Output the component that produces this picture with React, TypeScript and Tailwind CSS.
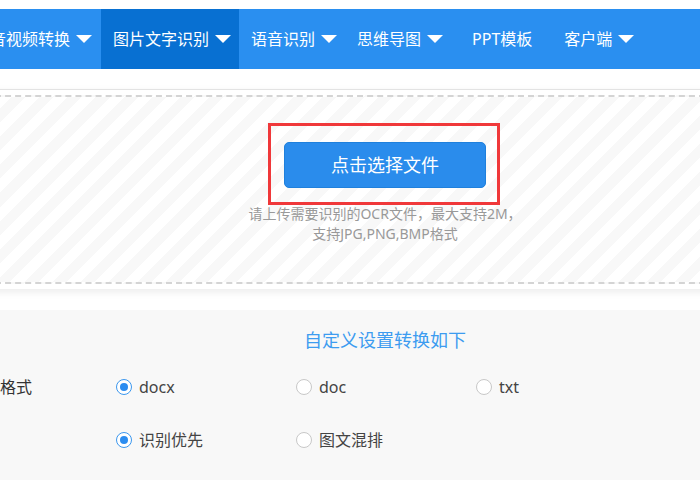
import React from 'react';

const font = "font-['Noto_Sans','Noto_Sans_CJK_SC',sans-serif]";

function Caret() {
  return <span className="ml-[6px] h-0 w-0 border-x-[8px] border-t-[8px] border-x-transparent border-t-white" />;
}

function Radio({ checked }: { checked?: boolean }) {
  return checked ? (
    <span className="flex h-[16px] w-[16px] items-center justify-center rounded-full border border-[#3b97ee] bg-white">
      <span className="h-[8px] w-[8px] rounded-full bg-[#2b8cf0]" />
    </span>
  ) : (
    <span className="h-[16px] w-[16px] rounded-full border border-[#c8c8c8] bg-white" />
  );
}

function Option({ label, checked }: { label: string; checked?: boolean }) {
  return (
    <label className="flex w-[180px] items-center gap-[7px] text-[16px] leading-6 text-[#444]">
      <Radio checked={checked} />
      {label}
    </label>
  );
}

export default function App() {
  return (
    <div className={`${font} flex h-[480px] w-[700px] flex-col overflow-hidden bg-white`}>
      {/* nav */}
      <nav className="mt-[9px] flex h-[60px] shrink-0 items-stretch bg-[#2a8ff0] text-[16px] leading-6 text-white">
        <div className="-ml-[22px] flex items-center pl-3 pr-[9px]">
          音视频转换
          <Caret />
        </div>
        <div className="flex items-center bg-[#0870d2] pl-3 pr-2">
          图片文字识别
          <Caret />
        </div>
        <div className="flex items-center pl-3 pr-2">
          语音识别
          <Caret />
        </div>
        <div className="flex items-center pl-3 pr-2">
          思维导图
          <Caret />
        </div>
        <div className="flex items-center pl-[21px] pr-5">PPT模板</div>
        <div className="flex items-center pl-3 pr-2">
          客户端
          <Caret />
        </div>
      </nav>

      {/* upload box */}
      <div className="-mx-[10px] mt-[20px] shrink-0 border-t border-[#e3e3e3] bg-white p-[5px] shadow-[0_3px_8px_rgba(0,0,0,0.08)]">
        <div className="flex h-[189px] flex-col items-center border-2 border-dashed border-[#d4d4d4] bg-[repeating-linear-gradient(135deg,#ffffff_0px,#ffffff_10px,#f8f8f8_10px,#f8f8f8_20px)] pl-[70px] pt-[45px]">
          <div className="relative">
            <button className="h-[46px] w-[202px] rounded-[5px] border border-[#1f80dc] bg-[#2a8cec] text-[18px] text-white">
              点击选择文件
            </button>
            <div className="pointer-events-none absolute -bottom-[17px] -left-[16px] -right-[14px] -top-[19px] border-[3px] border-[#f0383a]" />
          </div>
          <p className="mt-[16px] text-center text-[14px] leading-5 text-[#999]">
            请上传需要识别的OCR文件，最大支持2M，
            <br />
            支持JPG,PNG,BMP格式
          </p>
        </div>
      </div>

      {/* settings */}
      <div className="mt-[21px] flex-1 bg-[#f8f8f8]">
        <h2 className="pl-[70px] pt-[18px] text-center text-[18px] leading-6 text-[#3d9cf0]">自定义设置转换如下</h2>
        <div className="mt-2 flex h-[53px] items-center">
          <div className="w-[116px] text-[16px] leading-6 text-[#333]">格式</div>
          <Option label="docx" checked />
          <Option label="doc" />
          <Option label="txt" />
        </div>
        <div className="flex h-[53px] items-center">
          <div className="w-[116px]" />
          <Option label="识别优先" checked />
          <Option label="图文混排" />
        </div>
      </div>
    </div>
  );
}
